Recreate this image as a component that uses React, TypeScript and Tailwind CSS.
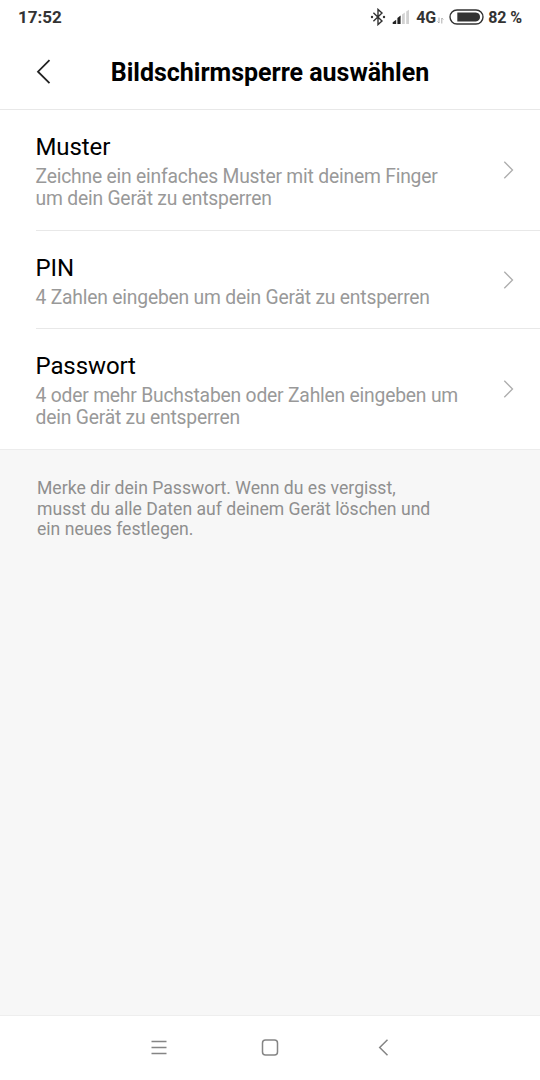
interface LockOption {
  title: string;
  lines: string[];
}

const OPTIONS: LockOption[] = [
  {
    title: 'Muster',
    lines: ['Zeichne ein einfaches Muster mit deinem Finger', 'um dein Gerät zu entsperren'],
  },
  {
    title: 'PIN',
    lines: ['4 Zahlen eingeben um dein Gerät zu entsperren'],
  },
  {
    title: 'Passwort',
    lines: ['4 oder mehr Buchstaben oder Zahlen eingeben um', 'dein Gerät zu entsperren'],
  },
];

function BluetoothIcon() {
  return (
    <svg width="16" height="18" viewBox="0 0 16 18" fill="none" stroke="#333" strokeWidth="1.4">
      <path d="M3.4 4.8 L12 13 L8 16.6 V1.4 L12 5 L3.4 13.2" />
      <circle cx="2" cy="9" r="1.2" fill="#333" stroke="none" />
      <circle cx="14" cy="9" r="1.2" fill="#333" stroke="none" />
    </svg>
  );
}

function SignalIcon() {
  return (
    <svg width="18" height="16" viewBox="0 0 18 16">
      <path d="M0.7 15 V13.2 L4.2 10.8 V15 Z" fill="#222" />
      <path d="M5.4 15 V9 L8.6 6.6 V15 Z" fill="#222" />
      <path d="M10 15 V5.4 L12.8 3.6 V15 Z" fill="#d2d2d2" />
      <path d="M14.2 15 V2.6 L17 0.8 V15 Z" fill="#d2d2d2" />
    </svg>
  );
}

function DataArrows() {
  return (
    <svg width="7" height="7" viewBox="0 0 7 7" fill="none" stroke="#b0b0b0" strokeWidth="1">
      <path d="M2 0.5 V6 L0.5 4.5" />
      <path d="M4.8 6.5 V1 L6.3 2.5" />
    </svg>
  );
}

function BatteryIcon() {
  return (
    <svg width="35" height="16" viewBox="0 0 35 16">
      <rect x="1" y="1" width="33" height="14" rx="7" fill="none" stroke="#333" strokeWidth="1.4" />
      <path d="M8.3 3.6 H26.8 Q31 4 31 8 Q31 12 26.8 12.4 H8.3 Z" fill="#333" />
    </svg>
  );
}

function StatusBar() {
  return (
    <div className="flex h-[34px] shrink-0 items-center pl-[18px] pr-[18px] text-[17px] font-bold text-[#333]">
      <span className="pt-px">17:52</span>
      <div className="ml-auto flex items-center">
        <BluetoothIcon />
        <div className="ml-[6px]">
          <SignalIcon />
        </div>
        <span className="ml-[6px] pt-px text-[16px]">4G</span>
        <div className="ml-[1px] mt-[7px]">
          <DataArrows />
        </div>
        <div className="ml-[5px]">
          <BatteryIcon />
        </div>
        <span className="ml-[4px] pt-px text-[16px] tracking-[-0.1px]">82 %</span>
      </div>
    </div>
  );
}

function OptionRow({ option, last }: { option: LockOption; last: boolean }) {
  return (
    <div className={last ? 'pl-[35.5px]' : 'ml-[35.5px] border-b border-[#e8e8e8]'}>
      <div className="flex items-center pr-[26px]">
        <div className={option.lines.length > 1 ? 'flex-1 pt-[23px] pb-[20px]' : 'flex-1 pt-[23px] pb-[20px] -mb-px'}>
          <div className="text-[24px] leading-[28px] tracking-[-0.1px] text-black">{option.title}</div>
          <div className="mt-[5px] text-[19.3px] leading-[22px] tracking-[-0.2px] text-[#999]">
            {option.lines.map((line) => (
              <div key={line} className="whitespace-nowrap">
                {line}
              </div>
            ))}
          </div>
        </div>
        <svg width="11" height="18" viewBox="0 0 11 18" fill="none" stroke="#adadad" strokeWidth="1.3">
          <path d="M1.3 0.8 L9.5 9 L1.3 17.2" />
        </svg>
      </div>
    </div>
  );
}

export default function App() {
  return (
    <div className="flex h-screen flex-col overflow-hidden bg-[#f7f7f7] font-[Roboto,sans-serif]">
      <div className="border-b border-[#e8e8e8] bg-white">
        <StatusBar />
        <div className="relative flex h-[75px] items-center justify-center">
          <svg className="absolute left-[36px] top-[25px]" width="15" height="25" viewBox="0 0 15 25" fill="none" stroke="#222" strokeWidth="1.8">
            <path d="M13.5 1.2 L2 12.7 L13.5 24.2" />
          </svg>
          <h1 className="pt-[3px] text-[25px] font-bold leading-[30px] tracking-[-0.02px] text-black">Bildschirmsperre auswählen</h1>
        </div>
      </div>

      <div className="border-b border-[#ececec] bg-white">
        {OPTIONS.map((option, i) => (
          <OptionRow key={option.title} option={option} last={i === OPTIONS.length - 1} />
        ))}
      </div>

      <div className="flex-1 px-[37px] pt-[28px] text-[17.6px] leading-[20.5px] text-[#8f8f8f]">
        <div>Merke dir dein Passwort. Wenn du es vergisst,</div>
        <div>musst du alle Daten auf deinem Gerät löschen und</div>
        <div>ein neues festlegen.</div>
      </div>

      {/* Navigation keys */}
      <div className="flex h-[65px] shrink-0 items-center border-t border-[#eee] bg-white pl-[151px]">
        <svg width="16" height="16" viewBox="0 0 16 16" stroke="#858585" strokeWidth="1.3">
          <path d="M0.5 1.5 H15.5 M0.5 7.5 H15.5 M0.5 13.5 H15.5" />
        </svg>
        <svg className="ml-[94px]" width="18" height="18" viewBox="0 0 18 18" fill="none" stroke="#858585" strokeWidth="1.5">
          <rect x="1.5" y="1" width="15" height="15" rx="3" />
        </svg>
        <svg className="ml-[99px]" width="11" height="18" viewBox="0 0 11 18" fill="none" stroke="#858585" strokeWidth="1.5">
          <path d="M9.5 0.7 L1.7 8.5 L9.5 16.3" />
        </svg>
      </div>
    </div>
  );
}
